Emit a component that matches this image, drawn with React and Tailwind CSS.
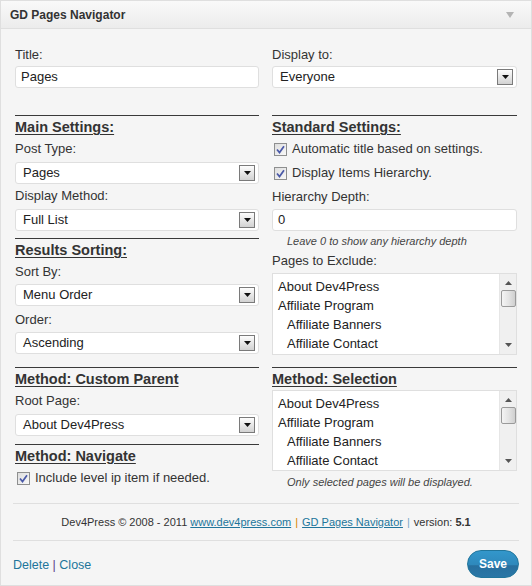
import React from 'react';

const font = { fontFamily: '"Liberation Sans", Arial, sans-serif' };

function Arrow() {
  return (
    <span className="absolute right-[3px] top-[2px] w-[16px] h-[16px] border border-[#7a7a7a] bg-gradient-to-b from-[#fdfdfd] to-[#d2d2d2] flex items-center justify-center">
      <svg width="7" height="4" viewBox="0 0 7 4"><path d="M0 0h7L3.5 4z" fill="#111" /></svg>
    </span>
  );
}

function Select({ value }) {
  return (
    <div className="relative h-[22px] bg-white border border-[#dfdfdf] rounded-[3px] text-[13px] leading-[20px] text-[#222] pl-[7px]">
      {value}
      <Arrow />
    </div>
  );
}

function Input({ value }) {
  return (
    <div className="h-[22px] bg-white border border-[#dfdfdf] rounded-[3px] text-[13px] leading-[20px] text-[#222] pl-[5px]">
      {value}
    </div>
  );
}

function Label({ children, className = '' }) {
  return <div className={`text-[13px] leading-[16px] text-[#333] ${className}`}>{children}</div>;
}

function Heading({ children, className = '' }) {
  return <div className={`text-[14.5px] leading-[18px] font-bold underline underline-offset-2 text-[#333] ${className}`}>{children}</div>;
}

function Rule({ className = '' }) {
  return <div className={`h-px bg-[#3a3a3a] ${className}`} />;
}

function Check({ children, className = '' }) {
  return (
    <div className={`flex items-center gap-[5px] text-[13px] leading-[16px] text-[#333] ${className}`}>
      <svg width="13" height="13" viewBox="0 0 13 13" className="ml-[2px] shrink-0">
        <defs>
          <linearGradient id="cb" x1="0" y1="0" x2="1" y2="1">
            <stop offset="0" stopColor="#dcdcdc" />
            <stop offset="1" stopColor="#fafafa" />
          </linearGradient>
        </defs>
        <rect x="0.5" y="0.5" width="12" height="12" fill="url(#cb)" stroke="#8e8f8f" />
        <path d="M3 6.5l2.5 3L10 3.2" fill="none" stroke="#4a59a8" strokeWidth="1.7" />
      </svg>
      {children}
    </div>
  );
}

function ListBox({ className = '' }) {
  const items = [
    ['About Dev4Press', false],
    ['Affiliate Program', false],
    ['Affiliate Banners', true],
    ['Affiliate Contact', true],
  ];
  return (
    <div className={`relative bg-white border border-[#dfdfdf] overflow-hidden ${className}`}>
      <div className="pt-[3px] pl-[5px] text-[13px] leading-[19px] text-[#222]">
        {items.map(([t, sub]) => (
          <div key={t} className={sub ? 'pl-[9px]' : ''}>{t}</div>
        ))}
      </div>
      <div className="absolute right-0 top-0 bottom-0 w-[17px] bg-[#f0f0f0] border-l border-[#e6e6e6] flex flex-col items-center">
        <svg width="7" height="4" viewBox="0 0 7 4" className="mt-[7px]"><path d="M3.5 0L7 4H0z" fill="#555" /></svg>
        <div className="mt-[5px] w-[15px] h-[17px] border border-[#9a9a9a] rounded-[2px] bg-gradient-to-r from-[#f4f4f4] via-[#e4e4e4] to-[#cfcfcf]" />
        <div className="flex-1" />
        <svg width="7" height="4" viewBox="0 0 7 4" className="mb-[7px]"><path d="M0 0h7L3.5 4z" fill="#555" /></svg>
      </div>
    </div>
  );
}

export default function App() {
  return (
    <div style={font} className="w-[532px] h-[586px] bg-[#f5f5f5] border border-[#dfdfdf] flex flex-col overflow-hidden">
      <div className="h-[28px] shrink-0 bg-gradient-to-b from-[#f9f9f9] to-[#ececec] border-b border-[#dfdfdf] flex items-center justify-between pl-[9px] pr-[17px]">
        <span className="text-[12px] font-bold text-[#333]">GD Pages Navigator</span>
        <svg width="8" height="6" viewBox="0 0 8 6"><path d="M0 0h8L4 6z" fill="#b4b4b4" /></svg>
      </div>

      <div className="grid grid-cols-[244px_245px] gap-x-[13px] pl-[14px] pt-[18px]">
        {/* left column */}
        <div className="flex flex-col">
          <Label>Title:</Label>
          <div className="mt-[3px]"><Input value="Pages" /></div>
          <Rule className="mt-[27px]" />
          <Heading className="mt-[2px]">Main Settings:</Heading>
          <Label className="mt-[5px]">Post Type:</Label>
          <div className="mt-[5px]"><Select value="Pages" /></div>
          <Label className="mt-[4px]">Display Method:</Label>
          <div className="mt-[5px]"><Select value="Full List" /></div>
          <Rule className="mt-[7px]" />
          <Heading className="mt-[2px]">Results Sorting:</Heading>
          <Label className="mt-[5px]">Sort By:</Label>
          <div className="mt-[4px]"><Select value="Menu Order" /></div>
          <Label className="mt-[6px]">Order:</Label>
          <div className="mt-[4px]"><Select value="Ascending" /></div>
          <Rule className="mt-[13px]" />
          <Heading className="mt-[2px]">Method: Custom Parent</Heading>
          <Label className="mt-[5px]">Root Page:</Label>
          <div className="mt-[5px]"><Select value="About Dev4Press" /></div>
          <Rule className="mt-[8px]" />
          <Heading className="mt-[2px]">Method: Navigate</Heading>
          <Check className="mt-[5px]">Include level ip item if needed.</Check>
        </div>

        {/* right column */}
        <div className="flex flex-col">
          <Label>Display to:</Label>
          <div className="mt-[3px]"><Select value="Everyone" /></div>
          <Rule className="mt-[27px]" />
          <Heading className="mt-[2px]">Standard Settings:</Heading>
          <Check className="mt-[5px]">Automatic title based on settings.</Check>
          <Check className="mt-[8px]">Display Items Hierarchy.</Check>
          <Label className="mt-[8px]">Hierarchy Depth:</Label>
          <div className="mt-[4px]"><Input value="0" /></div>
          <div className="mt-[3px] pl-[15px] text-[11px] leading-[14px] italic text-[#444]">Leave 0 to show any hierarchy depth</div>
          <Label className="mt-[5px]">Pages to Exclude:</Label>
          <ListBox className="mt-[4px] h-[82px]" />
          <Rule className="mt-[12px]" />
          <Heading className="mt-[2px]">Method: Selection</Heading>
          <ListBox className="mt-[2px] h-[81px]" />
          <div className="mt-[4px] pl-[15px] text-[11px] leading-[14px] italic text-[#444]">Only selected pages will be displayed.</div>
        </div>
      </div>

      <div className="mx-[12px] mt-[14px] border-t border-b border-[#dfdfdf] py-[10px] text-center text-[11px] leading-[16px] text-[#333]">
        Dev4Press © 2008 - 2011{' '}
        <a className="text-[#21759b] underline">www.dev4press.com</a>
        <span className="mx-[4px] text-[#d98500]">|</span>
        <a className="text-[#21759b] underline">GD Pages Navigator</a>
        <span className="mx-[4px] text-[#7aa7c7]">|</span>
        version: <b>5.1</b>
      </div>

      <div className="mx-[12px] mt-[9px] flex items-center justify-between">
        <div className="text-[12.5px] text-[#21759b] mt-[2px]">
          Delete <span className="text-[#5a3f8c]">|</span> Close
        </div>
        <button className="w-[52px] h-[28px] rounded-full border border-[#21759b] bg-[linear-gradient(#3397cb_0%,#2e88bb_55%,#276f9e_56%,#2a76a6_100%)] text-white text-[12px] font-bold">
          Save
        </button>
      </div>
    </div>
  );
}
